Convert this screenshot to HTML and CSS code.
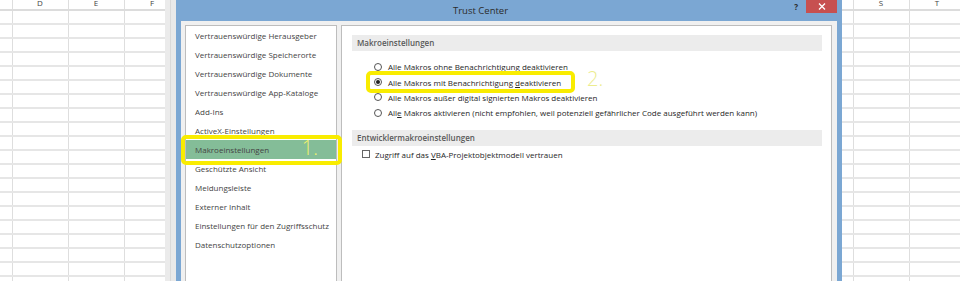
FILE: index.html
```html
<!DOCTYPE html>
<html>

<head>
    <title>Trust Center</title>
    <link rel="stylesheet" href="styles.css">
</head>

<body>
    <div class="screen">
        <!-- Tabelle links -->
        <div class="sheet sheet-left">
            <div class="sheet-head">
                <span>D</span><span>E</span><span>F</span>
            </div>
            <div class="sheet-body"></div>
        </div>
        <div class="shadow"></div>

        <div class="dialog">
            <div class="titlebar">
                <span class="title">Trust Center</span>
                <span class="help">?</span>
                <span class="close">
                    <svg width="8" height="7" viewBox="0 0 8 7"><path d="M1 0.5L7 6.5M7 0.5L1 6.5" stroke="#fff" stroke-width="1.3" fill="none"/></svg>
                </span>
            </div>
            <div class="dialog-body">
                <ul class="nav">
                    <li>Vertrauenswürdige Herausgeber</li>
                    <li>Vertrauenswürdige Speicherorte</li>
                    <li>Vertrauenswürdige Dokumente</li>
                    <li>Vertrauenswürdige App-Kataloge</li>
                    <li>Add-Ins</li>
                    <li>ActiveX-Einstellungen</li>
                    <li class="active">Makroeinstellungen
                        <span class="mark"></span>
                        <span class="step">1.</span>
                    </li>
                    <li>Geschützte Ansicht</li>
                    <li>Meldungsleiste</li>
                    <li>Externer Inhalt</li>
                    <li>Einstellungen für den Zugriffsschutz</li>
                    <li>Datenschutzoptionen</li>
                </ul>

                <div class="panel">
                    <div class="section">Makroeinstellungen</div>
                    <ul class="options">
                        <li><span class="radio"></span><span>Alle Makros ohne Benachrichti<u>g</u>ung deaktivieren</span></li>
                        <li><span class="radio on"></span><span>Alle Makros mit Benachrichtigung <u>d</u>eaktivieren</span>
                            <span class="mark"></span>
                            <span class="step">2.</span>
                        </li>
                        <li><span class="radio"></span><span>Alle Makros außer digital signierten Makros deaktivieren</span></li>
                        <li><span class="radio"></span><span>All<u>e</u> Makros aktivieren (nicht empfohlen, weil potenziell gefährlicher Code ausgeführt werden kann)</span></li>
                    </ul>
                    <div class="section section-dev">Entwicklermakroeinstellungen</div>
                    <div class="check"><span class="box"></span><span>Zugriff auf das <u>V</u>BA-Projektobjektmodell vertrauen</span></div>
                </div>
            </div>
        </div>

        <!-- Tabelle rechts -->
        <div class="sheet sheet-right">
            <div class="sheet-head">
                <span>S</span><span>T</span>
            </div>
            <div class="sheet-body"></div>
        </div>
    </div>
</body>

</html>
```

FILE: styles.css
```css
body {
    margin: 0;
    background: #fff;
    font-family: "Open Sans", "Noto Sans", sans-serif;
}

.screen {
    display: flex;
    width: 960px;
    height: 281px;
    overflow: hidden;
}

/* Tabellenraster */
.sheet {
    display: flex;
    flex-direction: column;
    overflow: hidden;
    background: linear-gradient(to right, #dedede 1px, transparent 1px) 0 0 / 56px 100% repeat-x;
}

.sheet-left {
    width: 165px;
    flex: none;
    background-position: 12px 0;
}

.sheet-right {
    flex: 1;
    background-position: 11px 0;
}

.sheet-head {
    display: flex;
    height: 9px;
    border-bottom: 2px solid #dcdcdc;
}

.sheet-left .sheet-head {
    padding-left: 12px;
}

.sheet-right .sheet-head {
    padding-left: 11px;
}

.sheet-head span {
    flex: none;
    width: 56px;
    text-align: center;
    font-size: 8px;
    line-height: 5.6px;
    color: #444;
}

.sheet-body {
    flex: 1;
    background: linear-gradient(to bottom, transparent 12px, #e6e6e6 12px) 0 0 / 100% 14px;
}

.shadow {
    width: 11px;
    flex: none;
    background: linear-gradient(to right, #ebebeb 5px, #d9d9d9 5px 6px, #e9e9e9 6px);
}

/* Dialog */
.dialog {
    width: 666px;
    flex: none;
    display: flex;
    flex-direction: column;
    background: #7ba7d3;
}

.titlebar {
    display: flex;
    align-items: flex-start;
    height: 21px;
    color: #2b2b2b;
}

.title {
    margin-left: 277px;
    font-size: 9.5px;
    line-height: 21px;
}

.help {
    margin-left: auto;
    margin-right: 8px;
    font-size: 8px;
    font-weight: 700;
    line-height: 13px;
}

.close {
    display: flex;
    align-items: center;
    justify-content: center;
    width: 31px;
    height: 13px;
    margin-right: 5px;
    background: #c75050;
}

.dialog-body {
    flex: 1;
    display: flex;
    gap: 4px;
    margin: 0 5px;
    padding: 4px 5px 0 4px;
    background: #f0f0f0;
    font-size: 8px;
}

.nav {
    width: 152px;
    flex: none;
    box-sizing: border-box;
    margin: 0;
    padding: 0;
    list-style: none;
    background: #fff;
    border: 1px solid #bdbdbd;
    border-bottom: none;
}

.nav li {
    position: relative;
    height: 19px;
    line-height: 19px;
    padding-left: 9px;
    color: #444;
    white-space: nowrap;
}

.nav li.active {
    background: #84bd98;
}

/* gelbe Markierungen */
.mark {
    position: absolute;
    box-sizing: border-box;
    border: 4px solid #f9ec00;
    border-radius: 5px;
}

.step {
    position: absolute;
    font-size: 20px;
    font-weight: 300;
    line-height: 20px;
}

.nav .mark {
    left: -5px;
    right: -6px;
    top: -5px;
    bottom: -6px;
}

.nav .step {
    right: 18px;
    top: -2px;
    color: #f3f36c;
}

.panel {
    flex: 1;
    padding: 9px 9px 0 10px;
    background: #fff;
    border: 1px solid #bdbdbd;
    border-bottom: none;
}

.section {
    height: 16px;
    line-height: 16px;
    padding-left: 5px;
    background: #ececec;
    color: #595959;
    font-weight: 600;
}

.options {
    margin: 8px 0 0;
    padding: 0;
    list-style: none;
}

.options li {
    position: relative;
    display: flex;
    align-items: center;
    height: 15.4px;
    padding-left: 22px;
    color: #262626;
    white-space: nowrap;
}

.radio {
    display: flex;
    align-items: center;
    justify-content: center;
    width: 8px;
    height: 8px;
    margin-right: 6px;
    box-sizing: border-box;
    border: 1px solid #555;
    border-radius: 50%;
}

.radio.on::after {
    content: "";
    width: 4px;
    height: 4px;
    border-radius: 50%;
    background: #222;
}

.options .mark {
    left: 14px;
    top: -3px;
    width: 209px;
    height: 22px;
}

.options .step {
    left: 235px;
    top: -5px;
    color: #ecec8e;
}

.section-dev {
    margin-top: 9px;
}

.check {
    display: flex;
    align-items: center;
    height: 15px;
    margin-top: 1px;
    padding-left: 10px;
    color: #262626;
}

.check .box {
    width: 8px;
    height: 8px;
    margin-right: 5px;
    box-sizing: border-box;
    border: 1px solid #666;
}
```
